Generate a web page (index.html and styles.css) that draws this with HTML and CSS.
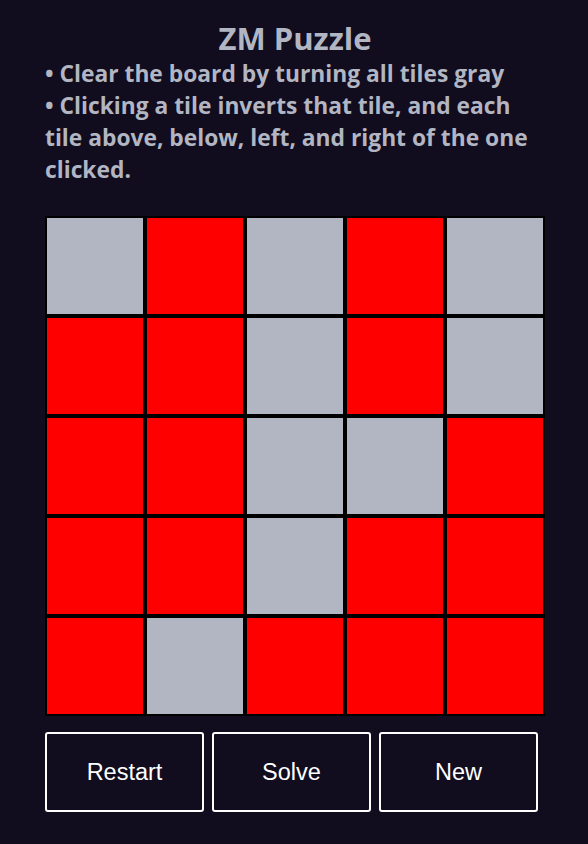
FILE: index.html
```html
<!DOCTYPE html>
<html>
<head>
<meta charset="utf-8">
<link rel="stylesheet" href="styles.css">
</head>
<body>
<div class="app">
  <h1 class="title">ZM Puzzle</h1>
  <div class="rules">
    <p class="rule">• Clear the board by turning all tiles gray</p>
    <p class="rule">• Clicking a tile inverts that tile, and each tile above, below, left, and right of the one clicked.</p>
  </div>
  <div class="board">
    <div class="tile off"></div><div class="tile on"></div><div class="tile off"></div><div class="tile on"></div><div class="tile off"></div>
    <div class="tile on"></div><div class="tile on"></div><div class="tile off"></div><div class="tile on"></div><div class="tile off"></div>
    <div class="tile on"></div><div class="tile on"></div><div class="tile off"></div><div class="tile off"></div><div class="tile on"></div>
    <div class="tile on"></div><div class="tile on"></div><div class="tile off"></div><div class="tile on"></div><div class="tile on"></div>
    <div class="tile on"></div><div class="tile off"></div><div class="tile on"></div><div class="tile on"></div><div class="tile on"></div>
  </div>
  <div class="controls">
    <button class="btn">Restart</button>
    <button class="btn">Solve</button>
    <button class="btn">New</button>
  </div>
</div>
</body>
</html>
```
FILE: styles.css
```css
html, body {
  margin: 0;
  padding: 0;
  background: #110c1e;
}
.app {
  width: 500px;
  margin-left: 45px;
  padding-top: 19px;
  font-family: "Open Sans", "Noto Sans", sans-serif;
  color: #b2b6c3;
}
.title {
  margin: 0;
  text-align: center;
  font-size: 31px;
  font-weight: 700;
  line-height: 38px;
}
.rules {
  padding-top: 1px;
  margin-bottom: 30px;
}
.rule {
  margin: 0;
  font-size: 22.8px;
  font-weight: 700;
  line-height: 32px;
}
.board {
  display: grid;
  grid-template-columns: repeat(5, 100px);
  grid-template-rows: repeat(5, 100px);
}
.tile {
  border: 2px solid #000;
}
.tile.on { background: #ff0000; }
.tile.off { background: #b2b6c3; }
.controls {
  display: flex;
  gap: 8px;
  margin-top: 16px;
  width: 493px;
}
.btn {
  flex: 1;
  height: 80px;
  background: #110c1e;
  color: #fff;
  border: 2px solid #fff;
  border-radius: 3px;
  font-family: "Liberation Sans", Arial, sans-serif;
  font-size: 23.5px;
}
```
